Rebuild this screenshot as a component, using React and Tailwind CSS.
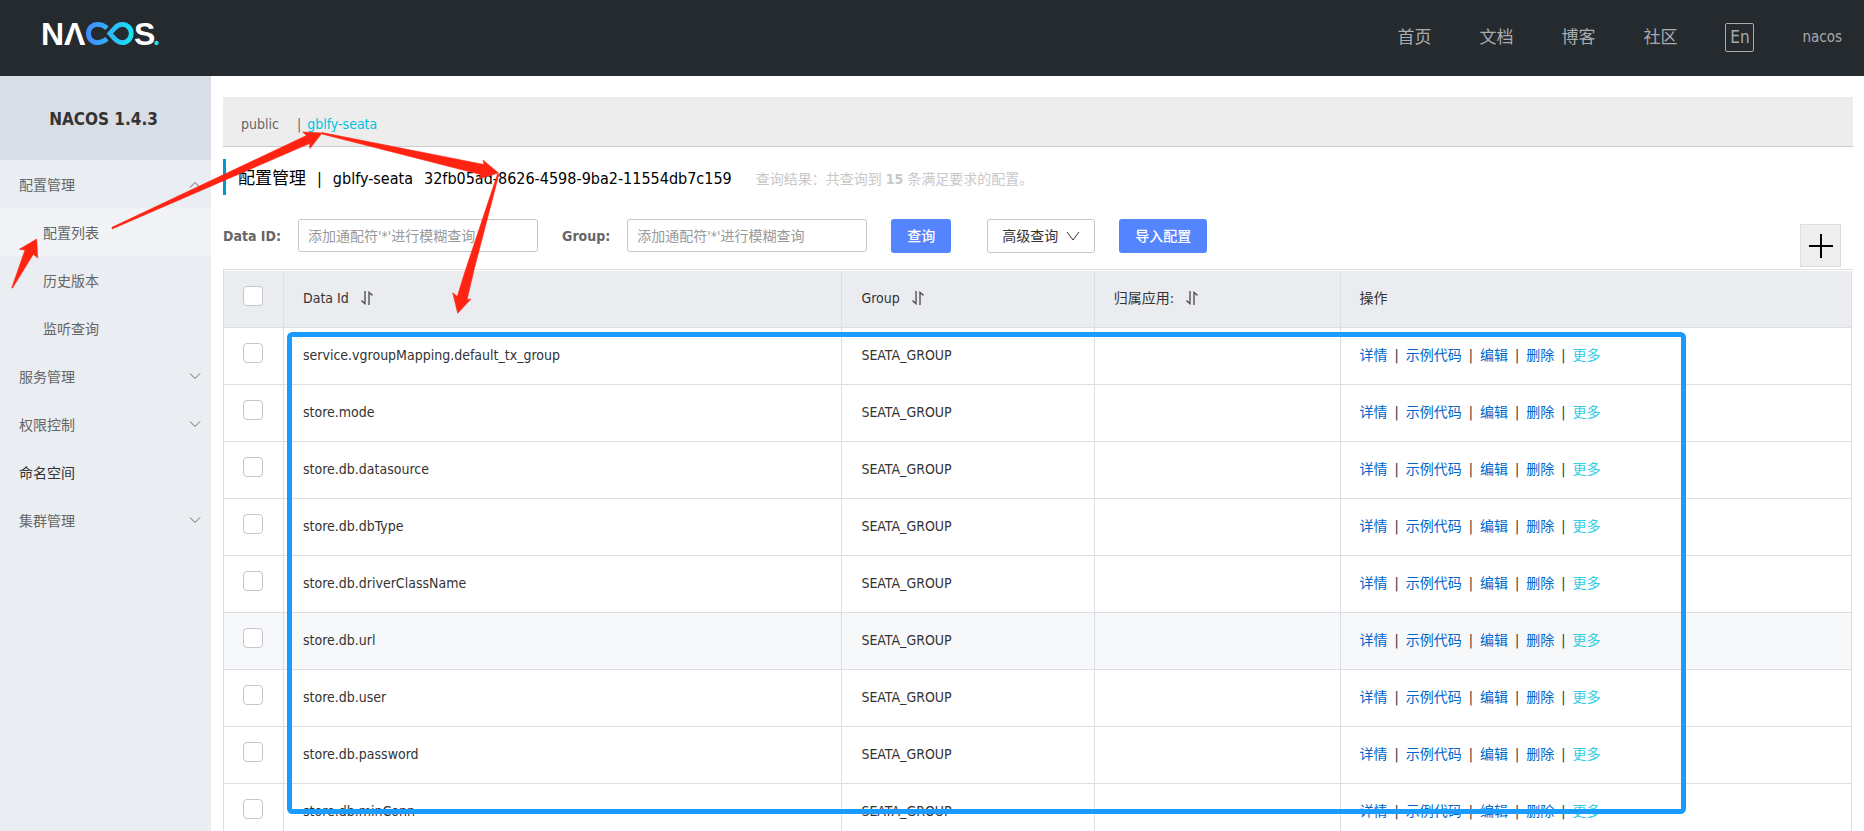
import React from "react";

const navLinks = ["首页", "文档", "博客", "社区"];

const menu = [
  { label: "配置管理", open: true, children: ["配置列表", "历史版本", "监听查询"] },
  { label: "服务管理", open: false },
  { label: "权限控制", open: false },
  { label: "命名空间", leaf: true },
  { label: "集群管理", open: false },
];

const rows = [
  "service.vgroupMapping.default_tx_group",
  "store.mode",
  "store.db.datasource",
  "store.db.dbType",
  "store.db.driverClassName",
  "store.db.url",
  "store.db.user",
  "store.db.password",
  "store.db.minConn",
];

const cell = "border-r border-b border-[#dcdee3] px-[19px] pb-[2px] text-left font-normal";

function Logo() {
  return (
    <svg width="122" height="48" viewBox="0 -8 122 48" role="img" aria-label="Nacos">
      <defs>
        <linearGradient id="loop" gradientUnits="userSpaceOnUse" x1="46" y1="0" x2="94" y2="0">
          <stop offset="0" stopColor="#4388ff" />
          <stop offset="1" stopColor="#16e6f2" />
        </linearGradient>
      </defs>
      <g fill="#fff" fontFamily="Liberation Sans, sans-serif" fontWeight="700" fontSize="32">
        <text x="1" y="25">N</text>
        <text x="24" y="25">Λ</text>
        <text x="94" y="25">S</text>
      </g>
      <g fill="none" stroke="url(#loop)" strokeWidth="4.8">
        <path d="M67 8.200C64 5.500 61 4.400 57.500 4.400C52.300 4.400 48.400 8.400 48.400 13.500S52.300 22.600 57.500 22.600C61 22.600 64 21.500 67 18.800" />
        <path d="M69.800 13.500L75 7.800C77.200 5.500 79.600 4.400 82.300 4.400C87.400 4.400 91.200 8.400 91.200 13.500S87.400 22.600 82.300 22.600C79.600 22.600 77.200 21.500 75 19.200Z" />
      </g>
      <circle cx="116.500" cy="23" r="2.200" fill="#16e6f2" />
    </svg>
  );
}

function Chevron({ up }) {
  return (
    <svg width="12" height="8" viewBox="0 0 12 8" fill="none" stroke="currentColor" aria-hidden="true">
      <path d={up ? "M1 6.500L6 1.500L11 6.500" : "M1 0.500L6 5.500L11 0.500"} />
    </svg>
  );
}

function SortIcon() {
  return (
    <svg width="14" height="14" viewBox="0 0 14 14" fill="none" stroke="#555" strokeWidth="1.4" aria-hidden="true">
      <path d="M5 0V12.600L1.500 9.600" />
      <path d="M9 14V1.400L12.500 4.400" />
    </svg>
  );
}

function Check({ label }) {
  return (
    <input
      type="checkbox"
      aria-label={label}
      className="mb-1 block size-5 appearance-none rounded border border-[#c4c6cf] bg-white"
    />
  );
}

function Field({ id, label }) {
  return (
    <div className="flex items-center gap-[17px]">
      <label htmlFor={id} className="font-bold text-[#666]">{label}</label>
      <input
        id={id}
        type="text"
        placeholder="添加通配符'*'进行模糊查询"
        className="h-[33px] w-60 rounded-[3px] border border-[#c4c6cf] px-[9px] placeholder:text-[#999]"
      />
    </div>
  );
}

function Annotations() {
  return (
    <svg className="pointer-events-none absolute left-0 top-0" width="1864" height="831" viewBox="0 0 1864 831" aria-hidden="true">
      <rect x="289.500" y="334.500" width="1394" height="477" rx="3" fill="none" stroke="#1a9bff" strokeWidth="5" />
      <g fill="#ff2412" stroke="#ff2412" strokeWidth="0.6" strokeLinejoin="round">
        <path d="M11.700 288L25 250L19.300 249.300L36.700 239L37.700 258L33.300 254.300L12.500 288Z" />
        <path d="M112 227.300L306.500 135.500L302.700 132L322 133L310 148.500L309.500 143.500L112 229Z" />
        <path d="M322 132.600L484 164.500L483 160L498.500 173L479 178.700L480.500 174.500L322 134Z" />
        <path d="M497.500 174L465.500 270L457.300 296.500L452.700 292.700L457.700 313.300L471 299L467 299.700L474 270L499 174Z" />
      </g>
    </svg>
  );
}

export default function App() {
  return (
    <div className="relative flex h-screen flex-col overflow-hidden bg-white font-['DejaVu_Sans_Condensed','Noto_Sans_CJK_SC',sans-serif] text-sm text-[#333]">
      <header className="flex h-[76px] shrink-0 items-center justify-between bg-[#252a2f] pb-1 pl-10 pr-[22px] text-[#aaabad]">
        <a href="#home"><Logo /></a>
        <nav className="flex items-center gap-12 pt-[2px] text-[17px]">
          {navLinks.map((t) => (
            <a key={t} href="#nav">{t}</a>
          ))}
          <button type="button" className="h-[29px] w-[29px] rounded-xs border border-[#aaabad]">En</button>
          <a href="#user" className="pt-[2px] text-[15px]">nacos</a>
        </nav>
      </header>

      <div className="flex min-h-0 flex-1">
        <aside className="w-[211px] shrink-0 bg-[#eaedf2] text-[#666]">
          <h1 className="flex h-[84px] items-center justify-center bg-[#d9dde5] pr-1 pt-[2px] text-[17px] font-bold text-[#333]">
            NACOS 1.4.3
          </h1>
          <ul>
            {menu.map((m) => (
              <li key={m.label}>
                {m.leaf ? (
                  <a href="#menu" className="flex h-12 items-center px-[19px] pt-[2px] text-[#333]">{m.label}</a>
                ) : (
                  <button type="button" aria-expanded={m.open} className="flex h-12 w-full items-center justify-between pl-[19px] pr-[10px] pt-[2px]">
                    {m.label}
                    <Chevron up={m.open} />
                  </button>
                )}
                {m.children && (
                  <ul>
                    {m.children.map((c, i) => (
                      <li key={c}>
                        <a href="#menu" className={i === 0 ? "flex h-12 items-center bg-[#f1f3f7] pl-[43px] pt-[2px]" : "flex h-12 items-center pl-[43px] pt-[2px]"}>
                          {c}
                        </a>
                      </li>
                    ))}
                  </ul>
                )}
              </li>
            ))}
          </ul>
        </aside>

        <main className="min-w-0 flex-1 overflow-hidden pl-3 pr-[11px] pt-[21px]">
          <div className="flex h-[50px] items-center border-b border-[#ccc] bg-[#ededed] pl-[18px] pt-1 text-[#666]">
            <a href="#public">public</a>
            <span className="ml-[18px] mr-[6px]">|</span>
            <a href="#ns" className="text-[#00c1de]">gblfy-seata</a>
          </div>

          <div className="mt-3 flex h-9 items-center border-l-[3px] border-[#09c] pl-3 pt-1">
            <h2 className="flex items-baseline gap-[11px] text-base text-black">
              <span className="text-[17px]">配置管理</span>
              <span>|</span>
              <span>gblfy-seata</span>
              <span>32fb05ad-8626-4598-9ba2-11554db7c159</span>
            </h2>
            <p className="ml-6 text-[#c8c8c8]">查询结果：共查询到 <b>15</b> 条满足要求的配置。</p>
          </div>

          <form className="mt-6 flex items-start">
            <Field id="dataId" label="Data ID:" />
            <div className="ml-6"><Field id="group" label="Group:" /></div>
            <button type="button" className="ml-6 h-[34px] rounded-[3px] bg-[#5584ff] px-4 font-medium text-white">查询</button>
            <button type="button" className="ml-9 flex h-[34px] items-center gap-2 rounded-[3px] border border-[#c4c6cf] px-[14px]">
              高级查询
              <svg width="14" height="10" viewBox="0 0 14 10" fill="none" stroke="#333" aria-hidden="true">
                <path d="M1 1L7 9L13 1" />
              </svg>
            </button>
            <button type="button" className="ml-6 h-[34px] rounded-[3px] bg-[#5584ff] px-4 font-medium text-white">导入配置</button>
            <button type="button" aria-label="新建配置" className="ml-auto mr-3 mt-[5px] flex h-[43px] w-[41px] items-center justify-center border border-[#ddd] bg-[#eee]">
              <svg width="24" height="24" viewBox="0 0 24 24" stroke="#000" strokeWidth="2" aria-hidden="true">
                <path d="M12 0V24M0 12H24" />
              </svg>
            </button>
          </form>

          <div className="mt-[2px] border-l border-t border-[#dcdee3] pr-px pt-px">
            <table className="w-full table-fixed border-separate border-spacing-0">
              <colgroup>
                <col className="w-[60px]" />
                <col className="w-[34.3%]" />
                <col className="w-[15.5%]" />
                <col className="w-[15.1%]" />
                <col />
              </colgroup>
              <thead className="bg-[#ebecf0]">
                <tr className="h-[57px]">
                  <th className={cell}><Check label="全选" /></th>
                  <th className={cell}><span className="flex items-center gap-[11px]">Data Id <SortIcon /></span></th>
                  <th className={cell}><span className="flex items-center gap-[11px]">Group <SortIcon /></span></th>
                  <th className={cell}><span className="flex items-center gap-[11px]">归属应用: <SortIcon /></span></th>
                  <th className={cell}>操作</th>
                </tr>
              </thead>
              <tbody>
                {rows.map((r, i) => (
                  <tr key={r} className={i === 5 ? "h-[57px] bg-[#f7f8fa]" : "h-[57px]"}>
                    <td className={cell}><Check label={r} /></td>
                    <td className={cell}>{r}</td>
                    <td className={cell}>SEATA_GROUP</td>
                    <td className={cell}></td>
                    <td className={cell}>
                      <div className="flex gap-[7px] whitespace-nowrap">
                        <a href="#detail" className="text-[#06c]">详情</a>
                        <span>|</span>
                        <a href="#code" className="text-[#06c]">示例代码</a>
                        <span>|</span>
                        <a href="#edit" className="text-[#06c]">编辑</a>
                        <span>|</span>
                        <a href="#delete" className="text-[#06c]">删除</a>
                        <span>|</span>
                        <a href="#more" className="text-[#33cde5]">更多</a>
                      </div>
                    </td>
                  </tr>
                ))}
              </tbody>
            </table>
          </div>
        </main>
      </div>
      <Annotations />
    </div>
  );
}
